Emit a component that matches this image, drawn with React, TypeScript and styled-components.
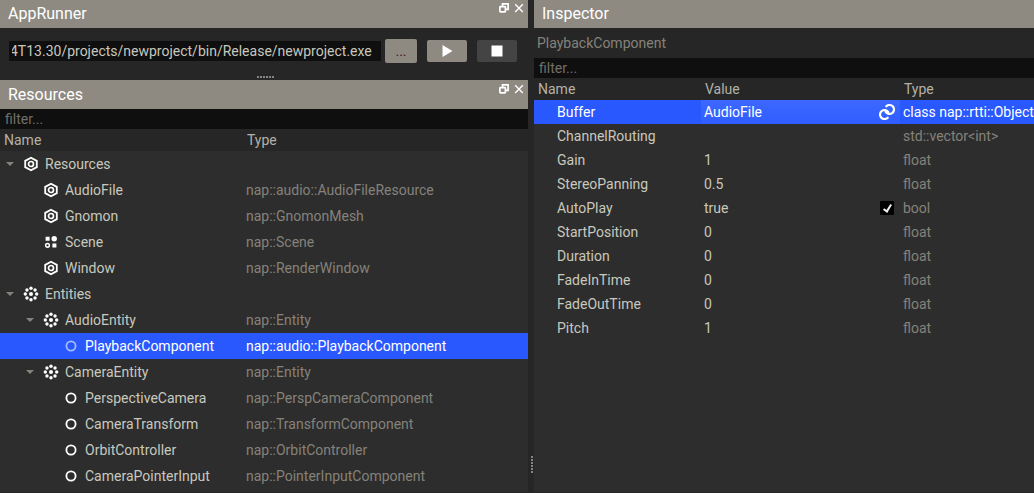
import React, { useLayoutEffect, useRef } from 'react';
import styled, { createGlobalStyle, css } from 'styled-components';

const GlobalStyle = createGlobalStyle`
  *, *::before, *::after { box-sizing: border-box; }
  html, body, #root { height: 100%; }
  body {
    margin: 0;
    overflow: hidden;
    background: #262626;
    color: #c8c8be;
    font: 14px/20px Roboto, "Liberation Sans", sans-serif;
  }
  input, button { font: inherit; color: inherit; margin: 0; }
`;

const Workspace = styled.main`
  display: flex;
  height: 100%;
  min-height: 0;
`;

const Side = styled.div<{ $grow: number }>`
  display: flex;
  flex-direction: column;
  flex: ${(p) => p.$grow} 1 0;
  min-width: 0;
`;

const Panel = styled.section<{ $fill?: boolean }>`
  display: flex;
  flex-direction: column;
  min-height: 0;
  ${(p) => p.$fill && css`flex: 1;`}
`;

const TitleBar = styled.header<{ $tall?: boolean }>`
  display: flex;
  justify-content: space-between;
  flex: none;
  height: ${(p) => (p.$tall ? 29 : 28)}px;
  padding: ${(p) => (p.$tall ? 1 : 0)}px 3px 0 8px;
  background: #8e8a82;
  color: #fff;
`;

const Title = styled.h2`
  margin: 0;
  font-size: 16px;
  font-weight: 400;
  line-height: 28px;
`;

const TitleButtons = styled.div`
  display: flex;
  gap: 4px;
  padding-top: 3px;
`;

const IconButton = styled.button`
  display: flex;
  align-items: flex-start;
  padding: 0;
  border: 0;
  background: none;
  color: #fff;
`;

const RunnerBar = styled.div`
  display: flex;
  align-items: center;
  height: 46px;
  padding: 0 11px 0 9px;
`;

const PathInput = styled.input`
  flex: 1;
  min-width: 0;
  height: 20px;
  padding: 0 9px 0 3px;
  border: 0;
  background: #0f0f0f;
`;

const ToolButton = styled.button<{ $kind: 'browse' | 'play' | 'stop' }>`
  display: flex;
  align-items: center;
  justify-content: center;
  width: ${(p) => (p.$kind === 'browse' ? 32 : 40)}px;
  height: ${(p) => (p.$kind === 'browse' ? 24 : 22)}px;
  margin-left: ${(p) => (p.$kind === 'browse' ? 4 : 10)}px;
  padding: 0;
  border: 0;
  border-radius: 2px;
  background: ${(p) => (p.$kind === 'stop' ? '#444' : '#8e8a82')};
  color: ${(p) => (p.$kind === 'browse' ? '#30211c' : '#fff')};
`;

const Splitter = styled.div<{ $vertical?: boolean }>`
  display: flex;
  flex: none;
  justify-content: center;
  ${(p) =>
    p.$vertical
      ? css`width: 6px; padding: 456px 0 0 3px; justify-content: flex-start;`
      : css`height: 6px; padding: 2px 0 0 2px;`}
`;

const FilterInput = styled.input<{ $inset: number }>`
  flex: none;
  width: 100%;
  height: 20px;
  padding: 0 ${(p) => p.$inset}px;
  border: 0;
  background: #0f0f0f;
  &::placeholder { color: #716f69; opacity: 1; }
`;

const ObjectName = styled.div`
  flex: none;
  height: 30px;
  padding: 0 3px;
  color: #85827a;
  line-height: 30px;
`;

const TableArea = styled.div`
  flex: 1;
  min-height: 0;
  margin-bottom: 1px;
  overflow: hidden;
  background: #2d2d2d;
`;

const Table = styled.table`
  width: 100%;
  border-collapse: collapse;
  table-layout: fixed;
`;

const HeadCell = styled.th<{ $width?: string }>`
  width: ${(p) => p.$width ?? 'auto'};
  height: 22px;
  padding: 0 4px;
  background: #262626;
  color: #b4b1a8;
  font-weight: 400;
  text-align: left;
`;

const Row = styled.tr<{ $height: number; $selected?: boolean }>`
  height: ${(p) => p.$height}px;
  ${(p) => p.$selected && css`background: #2a58ff; color: #fff;`}
`;

const Cell = styled.td<{ $dim?: boolean }>`
  padding: 0 0 0 3px;
  overflow: hidden;
  white-space: nowrap;
  ${(p) => p.$dim && css`color: #85827a;`}
  ${Row}[aria-selected='true'] & { color: #fff; }
`;

const NameCell = styled(Cell)`
  padding-left: 23px;
`;

const ValueCell = styled(Cell)<{ $editing?: boolean }>`
  padding: 0 5px 0 3px;
  ${(p) => p.$editing && css`background: linear-gradient(#3d68ff, #2f5dff);`}
`;

const ValueLine = styled.div`
  display: flex;
  align-items: center;
  justify-content: space-between;
`;

const TreeLabel = styled.div<{ $depth: number }>`
  display: flex;
  align-items: center;
  padding-left: ${(p) => p.$depth * 20}px;
`;

const Arrow = styled.span<{ $open?: boolean }>`
  width: 8px;
  height: 4px;
  margin: 0 9px 0 3px;
  background: ${(p) => (p.$open ? '#85827a' : 'transparent')};
  clip-path: polygon(0 0, 100% 0, 50% 100%);
`;

const TreeIcon = styled.svg`
  flex: none;
  margin-right: 6px;
`;

const CheckBox = styled.input`
  appearance: none;
  width: 14px;
  height: 14px;
  margin-right: 1px;
  border-radius: 1px;
  background: #000;
  &:checked {
    display: grid;
    place-items: center;
  }
  &:checked::after {
    content: '';
    width: 5px;
    height: 9px;
    margin-bottom: 2px;
    border: solid #eee;
    border-width: 0 2px 2px 0;
    transform: rotate(32deg);
  }
`;

type IconKind = 'resource' | 'scene' | 'entity' | 'component';

const ring = Array.from({ length: 8 }, (_, i) => {
  const a = (i * Math.PI) / 4;
  return [8 + 5.7 * Math.cos(a), 8 + 5.7 * Math.sin(a)];
});

function NodeIcon({ kind, selected }: { kind: IconKind; selected?: boolean }) {
  return (
    <TreeIcon width="16" height="16" viewBox="0 0 16 16" fill="none" stroke="#fff" aria-hidden>
      {kind === 'resource' && (
        <>
          <path d="M8 1.7 13.8 4.9V11.1L8 14.3 2.2 11.1V4.9Z" strokeWidth="1.8" />
          <circle cx="8" cy="8" r="2.5" strokeWidth="1.7" />
        </>
      )}
      {kind === 'scene' && (
        <>
          <path d="M2.6 2.8h4v4h-4zM9.4 9.4h4v4h-4z" fill="#fff" stroke="none" />
          <circle cx="11.2" cy="4.7" r="2.7" fill="#fff" stroke="none" />
          <circle cx="4.5" cy="11.3" r="1.9" strokeWidth="1.5" />
        </>
      )}
      {kind === 'entity' && (
        <g fill="#fff" stroke="none">
          <circle cx="8" cy="8" r="2" />
          {ring.map(([x, y], i) => (
            <circle key={i} cx={x} cy={y} r="1.7" />
          ))}
        </g>
      )}
      {kind === 'component' && (
        <circle cx="8" cy="8" r="4.6" strokeWidth="1.8" stroke={selected ? '#a3bbff' : '#fff'} />
      )}
    </TreeIcon>
  );
}

function WindowButtons() {
  return (
    <TitleButtons>
      <IconButton aria-label="Float panel">
        <svg width="10" height="10" viewBox="0 0 10 10" fill="none" stroke="#fff" strokeWidth="1.7">
          <path d="M3.5 3V.9H9.1V6.3H7" />
          <rect x=".9" y="3.7" width="5.5" height="5.2" rx=".6" />
        </svg>
      </IconButton>
      <IconButton aria-label="Close panel">
        <svg width="12" height="10" viewBox="0 0 12 10" fill="none" stroke="#fff" strokeWidth="1.4">
          <path d="m2.2 1.3 7.6 7.6M9.8 1.3 2.2 8.9" />
        </svg>
      </IconButton>
    </TitleButtons>
  );
}

function Grip({ vertical }: { vertical?: boolean }) {
  return (
    <svg width={vertical ? 2 : 17} height={vertical ? 17 : 2} fill="#858585" aria-hidden>
      {[0, 3, 6, 9, 12, 15].map((n) => (
        <rect key={n} x={vertical ? 0 : n} y={vertical ? n : 0} width="2" height="2" />
      ))}
    </svg>
  );
}

interface TreeNode {
  name: string;
  type?: string;
  depth: number;
  icon: IconKind;
  open?: boolean;
  selected?: boolean;
}

const nodes: TreeNode[] = [
  { name: 'Resources', depth: 0, icon: 'resource', open: true },
  { name: 'AudioFile', type: 'nap::audio::AudioFileResource', depth: 1, icon: 'resource' },
  { name: 'Gnomon', type: 'nap::GnomonMesh', depth: 1, icon: 'resource' },
  { name: 'Scene', type: 'nap::Scene', depth: 1, icon: 'scene' },
  { name: 'Window', type: 'nap::RenderWindow', depth: 1, icon: 'resource' },
  { name: 'Entities', depth: 0, icon: 'entity', open: true },
  { name: 'AudioEntity', type: 'nap::Entity', depth: 1, icon: 'entity', open: true },
  { name: 'PlaybackComponent', type: 'nap::audio::PlaybackComponent', depth: 2, icon: 'component', selected: true },
  { name: 'CameraEntity', type: 'nap::Entity', depth: 1, icon: 'entity', open: true },
  { name: 'PerspectiveCamera', type: 'nap::PerspCameraComponent', depth: 2, icon: 'component' },
  { name: 'CameraTransform', type: 'nap::TransformComponent', depth: 2, icon: 'component' },
  { name: 'OrbitController', type: 'nap::OrbitController', depth: 2, icon: 'component' },
  { name: 'CameraPointerInput', type: 'nap::PointerInputComponent', depth: 2, icon: 'component' },
];

interface Property {
  name: string;
  value: string;
  type: string;
  control?: 'link' | 'check';
}

const properties: Property[] = [
  { name: 'Buffer', value: 'AudioFile', type: 'class nap::rtti::Object', control: 'link' },
  { name: 'ChannelRouting', value: '', type: 'std::vector<int>' },
  { name: 'Gain', value: '1', type: 'float' },
  { name: 'StereoPanning', value: '0.5', type: 'float' },
  { name: 'AutoPlay', value: 'true', type: 'bool', control: 'check' },
  { name: 'StartPosition', value: '0', type: 'float' },
  { name: 'Duration', value: '0', type: 'float' },
  { name: 'FadeInTime', value: '0', type: 'float' },
  { name: 'FadeOutTime', value: '0', type: 'float' },
  { name: 'Pitch', value: '1', type: 'float' },
];

function AppRunner() {
  const path = useRef<HTMLInputElement>(null);

  // Keep the file name at the end of a long path in view.
  useLayoutEffect(() => {
    if (path.current) path.current.scrollLeft = path.current.scrollWidth;
  }, []);

  return (
    <Panel>
      <TitleBar>
        <Title>AppRunner</Title>
        <WindowButtons />
      </TitleBar>
      <RunnerBar>
        <PathInput
          ref={path}
          aria-label="Executable"
          defaultValue="4T13.30/projects/newproject/bin/Release/newproject.exe"
        />
        <ToolButton $kind="browse">...</ToolButton>
        <ToolButton $kind="play" aria-label="Run">
          <svg width="12" height="12" viewBox="0 0 12 12" fill="#fff"><path d="M1.5 0 11.5 6 1.5 12Z" /></svg>
        </ToolButton>
        <ToolButton $kind="stop" aria-label="Stop">
          <svg width="12" height="12" viewBox="0 0 12 12" fill="#fff"><rect x=".5" y=".5" width="11" height="11" /></svg>
        </ToolButton>
      </RunnerBar>
    </Panel>
  );
}

function Resources() {
  return (
    <Panel $fill>
      <TitleBar $tall>
        <Title>Resources</Title>
        <WindowButtons />
      </TitleBar>
      <FilterInput $inset={5} placeholder="filter..." aria-label="Filter resources" />
      <TableArea>
        <Table>
          <thead>
            <tr>
              <HeadCell $width="243px">Name</HeadCell>
              <HeadCell>Type</HeadCell>
            </tr>
          </thead>
          <tbody>
            {nodes.map((n) => (
              <Row key={n.name} $height={26} $selected={n.selected} aria-selected={!!n.selected}>
                <Cell>
                  <TreeLabel $depth={n.depth}>
                    <Arrow $open={n.open} />
                    <NodeIcon kind={n.icon} selected={n.selected} />
                    {n.name}
                  </TreeLabel>
                </Cell>
                <Cell $dim>{n.type}</Cell>
              </Row>
            ))}
          </tbody>
        </Table>
      </TableArea>
    </Panel>
  );
}

function Inspector() {
  return (
    <Panel $fill>
      <TitleBar>
        <Title>Inspector</Title>
      </TitleBar>
      <ObjectName>PlaybackComponent</ObjectName>
      <FilterInput $inset={5} placeholder="filter..." aria-label="Filter properties" />
      <TableArea>
        <Table>
          <thead>
            <tr>
              <HeadCell $width="167px">Name</HeadCell>
              <HeadCell $width="199px">Value</HeadCell>
              <HeadCell>Type</HeadCell>
            </tr>
          </thead>
          <tbody>
            {properties.map((p) => (
              <Row key={p.name} $height={24} $selected={p.control === 'link'} aria-selected={p.control === 'link'}>
                <NameCell>{p.name}</NameCell>
                <ValueCell $editing={p.control === 'link'}>
                  <ValueLine>
                    {p.value}
                    {p.control === 'link' && (
                      <IconButton aria-label="Select resource">
                        <svg width="16" height="16" viewBox="0 0 16 16" fill="none" stroke="#fff" strokeWidth="2.2" strokeLinecap="round">
                          <path d="M6.6 7.75A4.5 4.5 0 1 0 7.3 2.3" />
                          <path d="M9.4 8.25A4.5 4.5 0 1 0 8.7 13.7" />
                        </svg>
                      </IconButton>
                    )}
                    {p.control === 'check' && <CheckBox type="checkbox" defaultChecked aria-label={p.name} />}
                  </ValueLine>
                </ValueCell>
                <Cell $dim>{p.type}</Cell>
              </Row>
            ))}
          </tbody>
        </Table>
      </TableArea>
    </Panel>
  );
}

export default function App() {
  return (
    <>
      <GlobalStyle />
      <Workspace>
        <Side $grow={528}>
          <AppRunner />
          <Splitter><Grip /></Splitter>
          <Resources />
        </Side>
        <Splitter $vertical><Grip vertical /></Splitter>
        <Side $grow={500}>
          <Inspector />
        </Side>
      </Workspace>
    </>
  );
}
